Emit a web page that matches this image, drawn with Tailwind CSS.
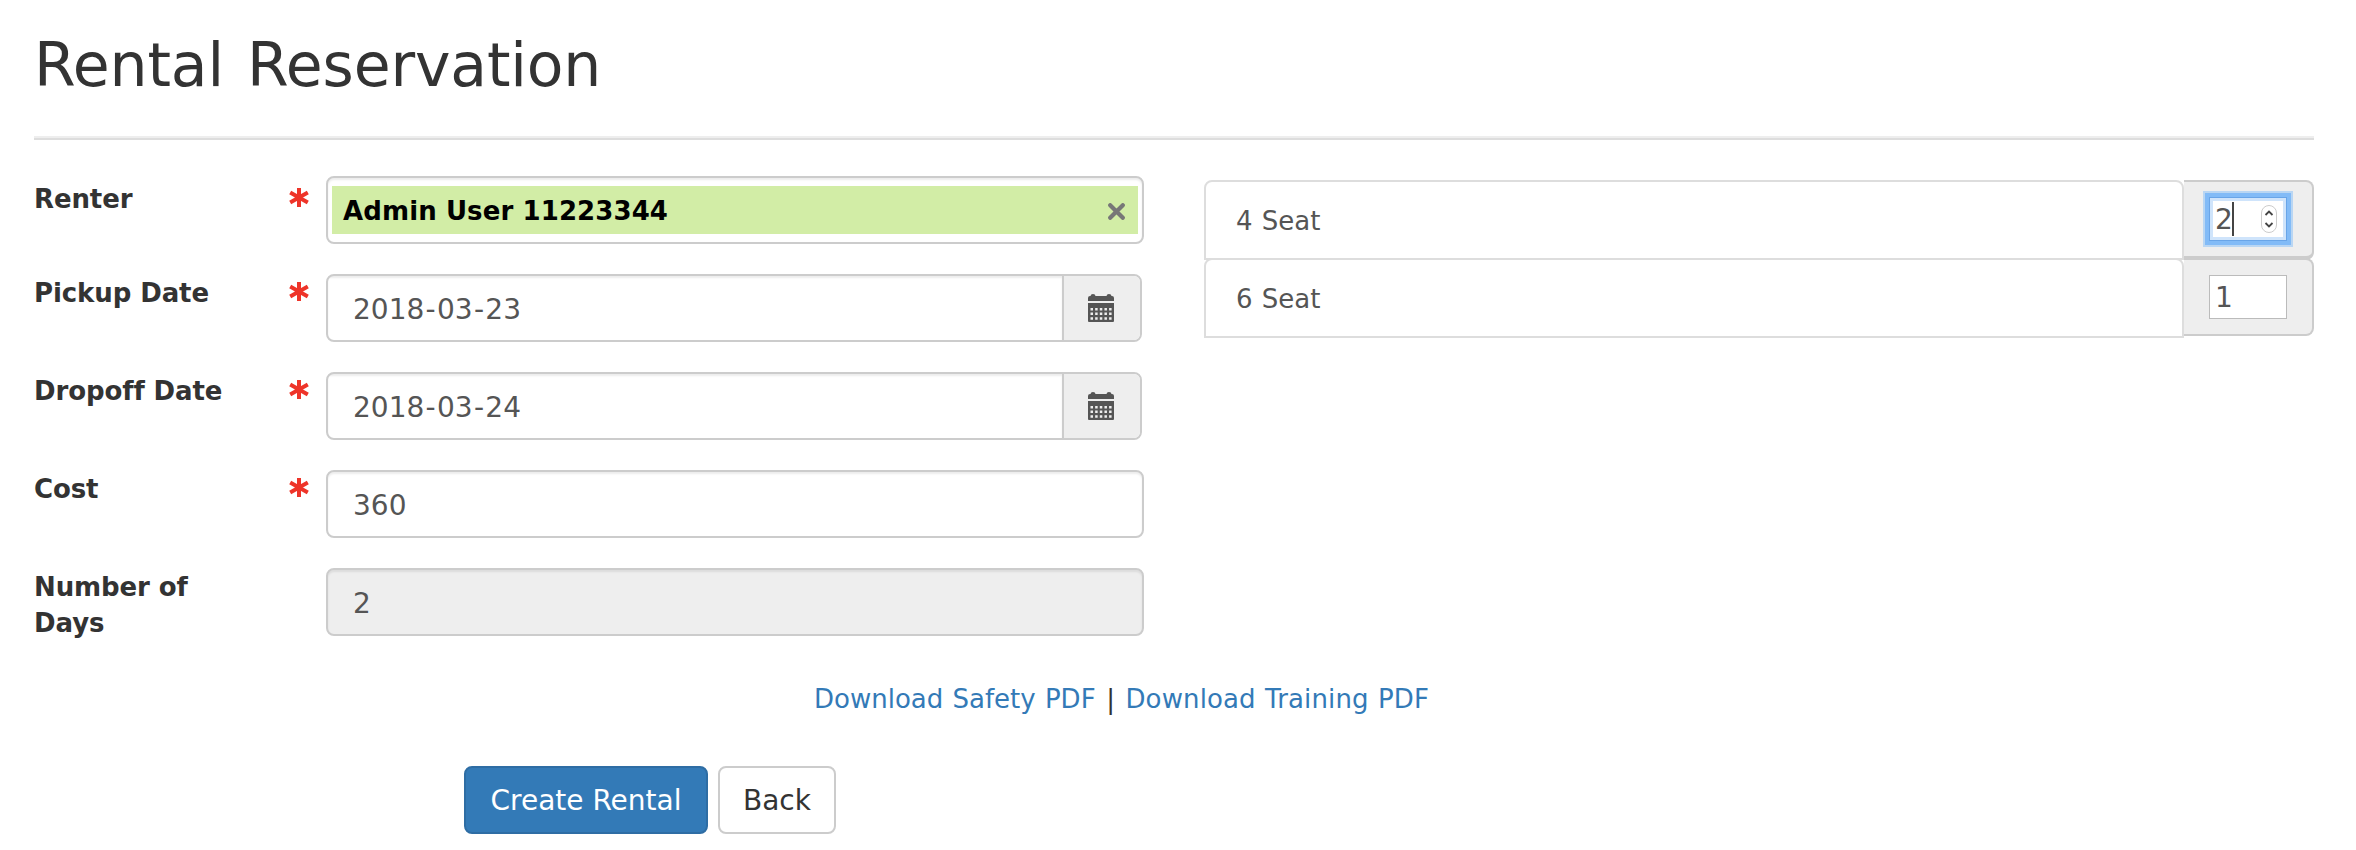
<!DOCTYPE html>
<html lang="en">
<head>
<meta charset="utf-8">
<title>Rental Reservation</title>
<script src="https://cdn.jsdelivr.net/npm/@tailwindcss/browser@4"></script>
</head>
<body class="w-[2356px] h-[850px] overflow-hidden bg-white text-[#333] text-[26px] font-['DejaVu_Sans',sans-serif]">
<svg class="hidden">
  <symbol id="req" viewBox="0 0 20 19"><path d="M10 0V19M1.200 4.600L18.800 14.400M18.800 4.600L1.200 14.400" stroke="#ee3429" stroke-width="4"/></symbol>
  <symbol id="cal" viewBox="0 0 26 28"><path fill="#555" d="M0 7V4Q0 2 2 2H2.500Q2.700 0 5 0T7.500 2H18.500Q18.700 0 21 0T23.500 2H24Q26 2 26 4V7ZM0 9H26V27Q26 28 25 28H1Q0 28 0 27Z"/><path stroke="#eee" stroke-width="2.500" stroke-dasharray="2.500 2.150" d="M2.500 15.200H24M2.500 19.800H24M2.500 24.400H24"/></symbol>
</svg>
<main class="pl-[34px] pr-[42px]">
  <header class="h-[138px] border-b-2 border-[#eee] pt-[30px]">
    <h1 class="text-[60px] leading-[70px] tracking-[-0.15px] [word-spacing:4px]">Rental Reservation</h1>
  </header>
  <div class="h-[2px] bg-[#ddd]"></div>
  <div class="flex pt-[36px]">
    <form class="w-[1110px] flex flex-col gap-[30px] font-bold tracking-[-0.1px]">
      <div class="flex h-[68px]">
        <label class="w-[255px] pt-[5px] leading-[36px]">Renter</label>
        <svg class="w-[20px] h-[19px] mt-[12px] mr-[17px]"><use href="#req"/></svg>
        <div class="w-[818px] h-[68px] border-2 border-[#ccc] rounded-[8px] px-[4px] pt-[8px] shadow-[inset_0_2px_2px_rgba(0,0,0,0.075)]">
          <div class="h-[48px] bg-[#d2eda6] flex items-center justify-between pl-[11px] pr-[13px] text-black leading-[46px]"><span class="pt-[2px] tracking-[0.1px]">Admin User 11223344</span>
            <svg class="w-[17px] h-[17px] mt-[3px]" viewBox="0 0 17 17"><path d="M2.200 2.200L14.800 14.800M14.800 2.200L2.200 14.800" stroke="#777" stroke-width="4.200" stroke-linecap="round"/></svg>
          </div>
        </div>
      </div>
      <div class="flex h-[68px]">
        <label class="w-[255px] pt-px leading-[36px]">Pickup Date</label>
        <svg class="w-[20px] h-[19px] mt-[8px] mr-[17px]"><use href="#req"/></svg>
        <div class="w-[816px] flex border-2 border-[#ccc] rounded-[8px] overflow-hidden font-normal tracking-normal text-[28px] leading-[64px] text-[#555]">
          <div class="w-[736px] border-r-2 border-[#ccc] pl-[25px] pt-[2px] h-[64px] shadow-[inset_0_2px_2px_rgba(0,0,0,0.075)]">2018<span class="px-[1.3px]">-</span>03<span class="px-[1.3px]">-</span>23</div>
          <div class="flex-1 bg-[#eee] pl-[24px] pt-[18px]"><svg class="w-[26px] h-[28px]"><use href="#cal"/></svg></div>
        </div>
      </div>
      <div class="flex h-[68px]">
        <label class="w-[255px] pt-px leading-[36px]">Dropoff Date</label>
        <svg class="w-[20px] h-[19px] mt-[8px] mr-[17px]"><use href="#req"/></svg>
        <div class="w-[816px] flex border-2 border-[#ccc] rounded-[8px] overflow-hidden font-normal tracking-normal text-[28px] leading-[64px] text-[#555]">
          <div class="w-[736px] border-r-2 border-[#ccc] pl-[25px] pt-[2px] h-[64px] shadow-[inset_0_2px_2px_rgba(0,0,0,0.075)]">2018<span class="px-[1.3px]">-</span>03<span class="px-[1.3px]">-</span>24</div>
          <div class="flex-1 bg-[#eee] pl-[24px] pt-[18px]"><svg class="w-[26px] h-[28px]"><use href="#cal"/></svg></div>
        </div>
      </div>
      <div class="flex h-[68px]">
        <label class="w-[255px] pt-px leading-[36px]">Cost</label>
        <svg class="w-[20px] h-[19px] mt-[8px] mr-[17px]"><use href="#req"/></svg>
        <div class="w-[818px] border-2 border-[#ccc] rounded-[8px] pl-[25px] pt-[2px] font-normal tracking-normal text-[28px] leading-[64px] text-[#555] shadow-[inset_0_2px_2px_rgba(0,0,0,0.075)]">360</div>
      </div>
      <div class="flex h-[68px]">
        <label class="w-[292px] pt-px leading-[36px]">Number of<br>Days</label>
        <div class="w-[818px] border-2 border-[#ccc] rounded-[8px] pl-[25px] pt-[2px] bg-[#eee] font-normal text-[28px] leading-[64px] text-[#555] shadow-[inset_0_2px_2px_rgba(0,0,0,0.075)]">2</div>
      </div>
    </form>
    <section class="ml-[60px] pt-[4px] text-[#555]">
      <div class="flex h-[78px]">
        <div class="w-[980px] h-[80px] border-2 border-[#ddd] rounded-t-[8px] pl-[30px] leading-[78px] [word-spacing:1px]">4 Seat</div>
        <div class="w-[130px] h-[80px] bg-[#eee] border-2 border-l-0 border-b-4 border-[#ccc] rounded-r-[8px] pl-[25px] pt-[15px]">
          <div class="w-[78px] h-[44px] bg-white border border-[#69a5e8] flex items-center pl-[5px] pr-[8px] text-[28px] leading-[42px] shadow-[inset_0_0_0_3px_#cfe4fb,0_0_0_4px_#82bbf7,0_0_0_6px_#b9d6f3]">
            <span class="w-[17px] pt-[2px]">2</span><span class="w-[2px] h-[34px] bg-[#444]"></span>
            <svg class="w-[18px] h-[30px] ml-auto" viewBox="0 0 18 30"><rect x="1.500" y="1.500" width="15" height="27" rx="7.500" fill="#fff" stroke="#ccc"/><path d="M5.500 11L9 7.500L12.500 11M5.500 19L9 22.500L12.500 19" fill="none" stroke="#444" stroke-width="1.800"/></svg>
          </div>
        </div>
      </div>
      <div class="flex h-[78px]">
        <div class="w-[980px] h-[80px] bg-white border-2 border-[#ddd] rounded-t-[8px] pl-[30px] leading-[78px] [word-spacing:1px]">6 Seat</div>
        <div class="w-[130px] h-[78px] bg-[#eee] border-2 border-l-0 border-[#ccc] rounded-r-[8px] pl-[25px] pt-[15px]">
          <div class="w-[78px] h-[44px] bg-white border border-[#bbb] pl-[5px] pt-px text-[28px] leading-[42px]">1</div>
        </div>
      </div>
    </section>
  </div>
  <p class="pt-[45px] pl-[780px] leading-[36px] whitespace-nowrap [word-spacing:1px]"><a class="text-[#337ab7]">Download Safety PDF</a> <span class="mx-[1.3px]">|</span> <a class="text-[#337ab7] tracking-[0.12px]">Download Training PDF</a></p>
  <div class="flex gap-[10px] pt-[49px] pl-[430px] text-[28px] leading-[64px]">
    <button class="w-[244px] h-[68px] border-2 border-[#2e6da4] bg-[#337ab7] text-white rounded-[8px] whitespace-nowrap"><span class="block pt-px">Create Rental</span></button>
    <button class="w-[118px] h-[68px] border-2 border-[#ccc] bg-white rounded-[8px]"><span class="block pt-px">Back</span></button>
  </div>
</main>
</body>
</html>
